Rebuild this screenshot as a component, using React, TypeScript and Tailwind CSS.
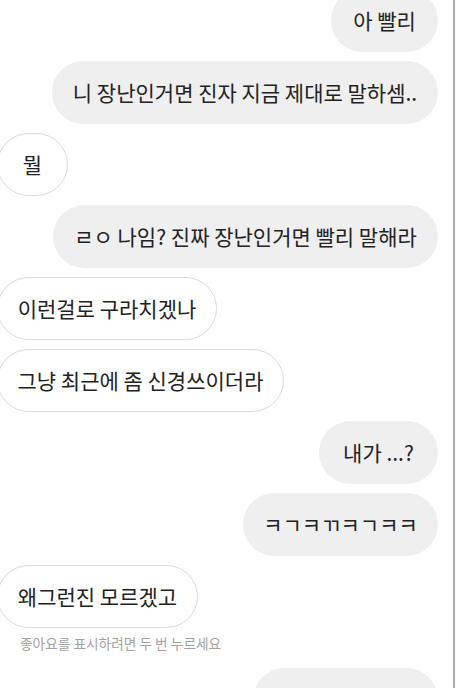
import React from "react";

type Msg = { side: "me" | "them"; text: string; w: string };

const font = { fontFamily: '"Noto Sans CJK KR", "Noto Sans", sans-serif' };

function Bubble({ side, text, w }: Msg) {
  if (side === "me") {
    return (
      <div className="flex justify-end pr-[15px]">
        <div className={`flex h-[63px] items-center justify-center whitespace-nowrap rounded-full bg-[#efefef] text-[21px] text-[#222222] ${w}`}>
          {text}
        </div>
      </div>
    );
  }
  return (
    <div className="flex justify-start ml-[-3px]">
      <div className={`flex h-[63px] items-center justify-center whitespace-nowrap rounded-full border border-[#dbdbdb] bg-white text-[21px] text-[#222222] ${w}`}>
        {text}
      </div>
    </div>
  );
}

export default function App() {
  return (
    <div className="h-[688px] w-[456px] overflow-hidden bg-white" style={font}>
      <div className="flex h-full w-[455px] flex-col border-r-2 border-[#ababab]">
        <div className="mt-[-11px] flex flex-col gap-[9px]">
          <Bubble side="me" text="아 빨리" w="w-[107px]" />
          <Bubble side="me" text="니 장난인거면 진자 지금 제대로 말하셈.." w="w-[386px]" />
          <Bubble side="them" text="뭘" w="w-[71px]" />
          <Bubble side="me" text="ㄹㅇ 나임? 진짜 장난인거면 빨리 말해라" w="w-[385px]" />
          <Bubble side="them" text="이런걸로 구라치겠나" w="w-[220px]" />
          <Bubble side="them" text="그냥 최근에 좀 신경쓰이더라" w="w-[287px]" />
          <Bubble side="me" text="내가 ...?" w="w-[119px]" />
          <Bubble side="me" text="ㅋㄱㅋㄲㅋㄱㅋㅋ" w="w-[195px]" />
          <Bubble side="them" text="왜그런진 모르겠고" w="w-[201px]" />
        </div>
        <div className="mt-[5px] flex h-[20px] items-center pl-[20px] text-[13.7px] text-[#a3a3a3]">
          좋아요를 표시하려면 두 번 누르세요
        </div>
        <div className="mt-[15px] flex justify-end pr-[15px]">
          <div className="h-[63px] w-[185px] rounded-full bg-[#efefef]" />
        </div>
      </div>
    </div>
  );
}
